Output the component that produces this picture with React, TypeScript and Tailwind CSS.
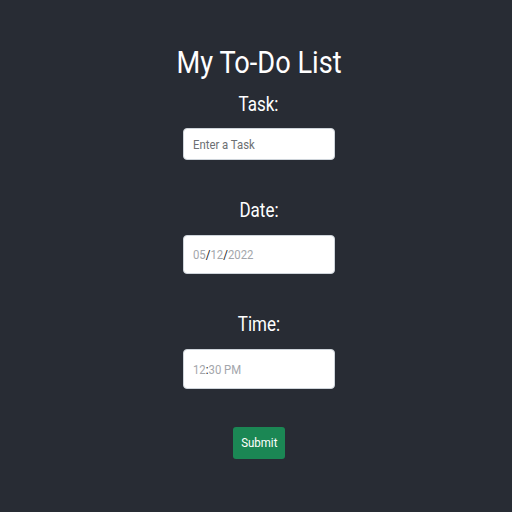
import React from 'react';

// text in the shot is horizontally squashed, so labels get a small x-scale
const Squash: React.FC<{ children: React.ReactNode }> = ({ children }) => (
    <span className="inline-block scale-x-[0.85] whitespace-nowrap">{children}</span>
);

const Field: React.FC<{ h: string; children: React.ReactNode }> = ({ h, children }) => (
    <div className={`w-[152px] ${h} text-[13.5px] bg-white border border-[#ced4da] rounded-[4px] flex items-center pl-[9px] pt-[1px] leading-none`}>
        <span className="inline-block scale-x-[0.84] origin-left whitespace-nowrap">{children}</span>
    </div>
);

const App: React.FC = () => {
    return (
        <div className="min-h-screen bg-[#282c34] flex flex-col items-center pt-[46px] pl-[6px] font-['Roboto',sans-serif] text-white">
            <h1 className="text-[32px] leading-none h-[32px]">
                <Squash>My To-Do List</Squash>
            </h1>

            {/* Task */}
            <label className="mt-[16px] text-[20px] leading-none h-[20px]">
                <Squash>Task:</Squash>
            </label>
            <div className="mt-[14px]">
                <Field h="h-[32px]">
                    <span className="text-[#6c6f73]">Enter a Task</span>
                </Field>
            </div>

            {/* Date */}
            <label className="mt-[40px] text-[20px] leading-none h-[20px]">
                <Squash>Date:</Squash>
            </label>
            <div className="mt-[15px]">
                <Field h="h-[39px]">
                    <span className="text-[#a3a6ab]">05</span>
                    <span className="text-[#111]">/</span>
                    <span className="text-[#a3a6ab]">12</span>
                    <span className="text-[#111]">/</span>
                    <span className="text-[#a3a6ab]">2022</span>
                </Field>
            </div>

            {/* Time */}
            <label className="mt-[40px] text-[20px] leading-none h-[20px]">
                <Squash>Time:</Squash>
            </label>
            <div className="mt-[15px]">
                <Field h="h-[40px]">
                    <span className="text-[#a3a6ab]">12</span>
                    <span className="text-[#111]">:</span>
                    <span className="text-[#a3a6ab]">30 PM</span>
                </Field>
            </div>

            <button className="mt-[38px] w-[52px] h-[32px] bg-[#1b8754] rounded-[3px] text-white text-[13.5px] leading-none flex items-center justify-center">
                <Squash>Submit</Squash>
            </button>
        </div>
    );
};

export default App;
